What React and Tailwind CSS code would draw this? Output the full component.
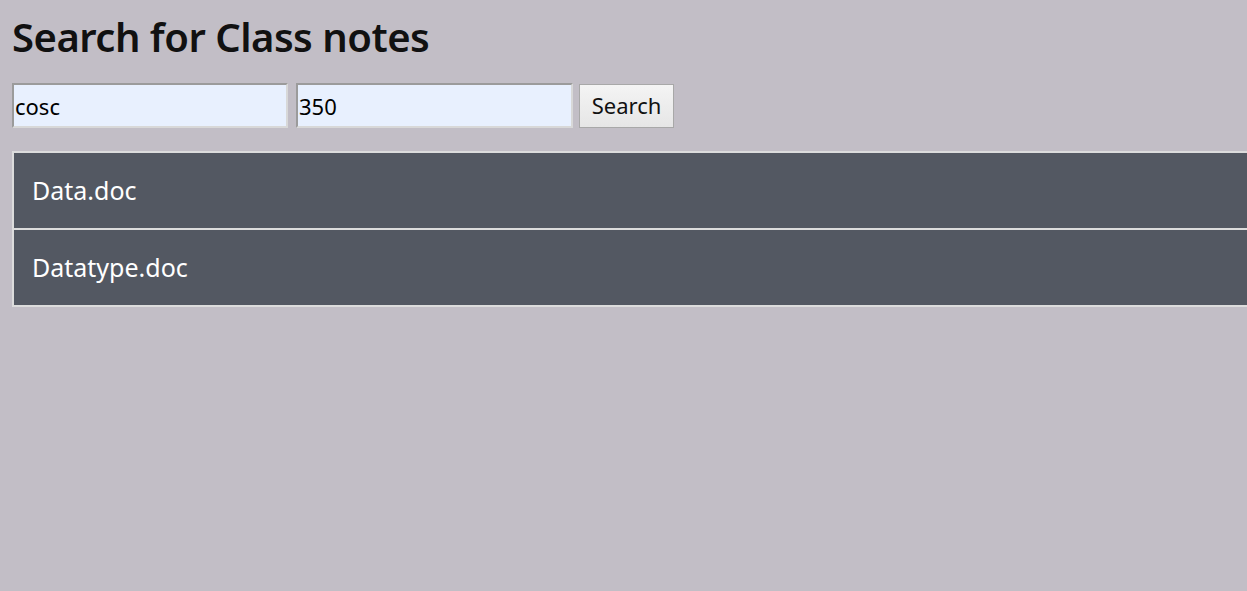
import React from "react";

const notes = ["Data.doc", "Datatype.doc"];

const App = () => (
  <div
    className="min-h-[591px] bg-[#c2bec6] overflow-hidden text-black"
    style={{ fontFamily: '"Noto Sans", "Open Sans", sans-serif' }}
  >
    <div className="px-3 pt-[13px]">
      <h1 className="text-[40px] font-semibold leading-[48px] tracking-[-0.5px] text-[#111]">
        Search for Class notes
      </h1>

      <div className="flex items-center mt-[22px] gap-2">
        <input
          defaultValue="cosc"
          className="w-[276px] h-[45px] bg-[#e8f0fe] border-2 border-t-[#9b9b9b] border-l-[#9b9b9b] border-b-[#d8d8d8] border-r-[#d8d8d8] px-[1px] text-[22px] outline-none"
        />
        <input
          defaultValue="350"
          className="w-[277px] h-[45px] bg-[#e8f0fe] border-2 border-t-[#9b9b9b] border-l-[#9b9b9b] border-b-[#d8d8d8] border-r-[#d8d8d8] px-[1px] text-[22px] outline-none"
        />
        <button className="w-[95px] h-[44px] bg-gradient-to-b from-[#f4f4f4] to-[#e6e6e6] border border-[#a8a8a8] text-[22px] -ml-[2px] text-[#111]">
          Search
        </button>
      </div>

      <ul className="mt-[23px] w-[1260px] border-2 border-[#dcdcdc]">
        {notes.map((n, i) => (
          <li
            key={n}
            className={`bg-[#535862] text-white text-[25px] flex items-center pl-[18px] ${
              i > 0 ? "border-t-2 border-[#dcdcdc] h-[77px]" : "h-[75px]"
            }`}
          >
            {n}
          </li>
        ))}
      </ul>
    </div>
  </div>
);

export default App;
